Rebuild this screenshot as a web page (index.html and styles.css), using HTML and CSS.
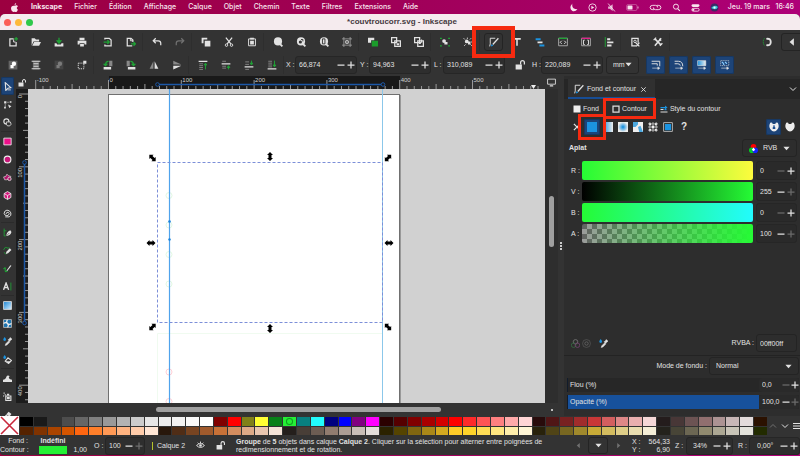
FILE: index.html
```html
<!DOCTYPE html>
<html lang="fr">
<head>
    <meta charset="UTF-8">
    <meta name="viewport" content="width=device-width, initial-scale=1.0">
    <title>*couvtroucorr.svg - Inkscape</title>
    <link rel="stylesheet" href="styles.css">
</head>
<body>
    <svg class="sprite" aria-hidden="true">
        <linearGradient id="blue-h"><stop offset="0" stop-color="#1b93e0"/><stop offset="1" stop-color="#eee"/></linearGradient>
        <linearGradient id="blue-d" x2="1" y2="1"><stop offset="0" stop-color="#1583d4"/><stop offset="1" stop-color="#d8f0ff"/></linearGradient>
        <radialGradient id="blue-r"><stop offset=".1" stop-color="#1b93e0"/><stop offset="1" stop-color="#eee"/></radialGradient>

        <!-- files and edit -->
        <symbol id="new" viewBox="0 0 16 16"><path d="M9 3H3v11h10V8" fill="none" stroke="currentColor" stroke-width="2"/><path d="M9 4v4h3" fill="none" stroke="currentColor" stroke-width="1.5"/><path d="M13 0v6M10 3h6" stroke="#1fa335" stroke-width="2"/></symbol>
        <symbol id="open" viewBox="0 0 16 16"><path d="M1 14V2h5l2 2h5v3H4z" fill="currentColor"/><path d="M5 8h11l-3 6H2z" fill="currentColor"/></symbol>
        <symbol id="save" viewBox="0 0 16 16"><path d="M1 10h3l1 2h6l1-2h3v5H1z" fill="currentColor"/><path d="M8 1v7M5 6l3 4 3-4z" fill="#1fa335" stroke="#1fa335" stroke-width="2"/></symbol>
        <symbol id="print" viewBox="0 0 16 16"><path d="M4 1h8v4H4zM1 6h14v6h-3v-2H4v2H1zM5 11h6v4H5z" fill="currentColor"/></symbol>
        <symbol id="import" viewBox="0 0 16 16"><path d="M3 4V2h7l3 3v9H3v-2" fill="none" stroke="currentColor" stroke-width="2"/><path d="M1 8h8M7 5l3 3-3 3" fill="none" stroke="#1fa335" stroke-width="2"/></symbol>
        <symbol id="export" viewBox="0 0 16 16"><path d="M10 14H2V2h6l3 3v3" fill="none" stroke="currentColor" stroke-width="2"/><path d="M7 2v4h4" fill="none" stroke="currentColor" stroke-width="1.5"/><path d="M8 11h6M12 8l3 3-3 3" fill="none" stroke="#1fa335" stroke-width="2"/></symbol>
        <symbol id="undo" viewBox="0 0 16 16"><path d="M3 6h7q4 0 4 4v3M6 2L2 6l4 4" fill="none" stroke="currentColor" stroke-width="2"/></symbol>
        <symbol id="redo" viewBox="0 0 16 16"><path d="M13 6H6q-4 0-4 4v3M10 2l4 4-4 4" fill="none" stroke="currentColor" stroke-width="2"/></symbol>
        <symbol id="copy" viewBox="0 0 16 16"><path d="M1 1h9v3H4v6H1z" fill="currentColor"/><path d="M6 6h9v9H6z" fill="currentColor"/></symbol>
        <symbol id="cut" viewBox="0 0 16 16"><path d="M3 1l8 10M13 1L5 11" stroke="currentColor" stroke-width="2"/><circle cx="4" cy="13" r="2" fill="none" stroke="currentColor" stroke-width="1.5"/><circle cx="12" cy="13" r="2" fill="none" stroke="currentColor" stroke-width="1.5"/></symbol>
        <symbol id="paste" viewBox="0 0 16 16"><path d="M2.500 3h11v11h-11z" fill="none" stroke="currentColor" stroke-width="1.500"/><path d="M5 1h6v3H5zM5 6h6v6H5z" fill="currentColor"/></symbol>
        <!-- zoom -->
        <symbol id="zoom-sel" viewBox="0 0 16 16"><circle cx="8" cy="7" r="6.500" fill="currentColor"/><path d="M11 11l4 4" stroke="currentColor" stroke-width="3"/></symbol>
        <symbol id="zoom-draw" viewBox="0 0 16 16"><circle cx="8" cy="7" r="6.500" fill="currentColor"/><circle cx="7" cy="8" r="2.500" fill="#333"/><path d="M8 4h3v3" stroke="#333" stroke-width="1.500" fill="none"/><path d="M11 11l4 4" stroke="currentColor" stroke-width="3"/></symbol>
        <symbol id="zoom-page" viewBox="0 0 16 16"><circle cx="8" cy="7" r="6.500" fill="currentColor"/><path d="M5.500 3h4v8h-4z" fill="none" stroke="#333" stroke-width="1.500"/><path d="M11 11l4 4" stroke="currentColor" stroke-width="3"/></symbol>
        <symbol id="frame" viewBox="0 0 16 16"><path d="M3 0v16M13 0v16M0 3h16M0 13h16" stroke="#aaa" stroke-width="1.200"/><path d="M6 6h4v4H6z" fill="none" stroke="currentColor" stroke-width="1.500"/></symbol>
        <symbol id="dup" viewBox="0 0 16 16"><path d="M0 1h10v4H5v4H0z" fill="currentColor"/><path d="M6 6h10v9H6z" fill="#1b9c2b"/></symbol>
        <symbol id="clone" viewBox="0 0 16 16"><path d="M1 1h8v8H1zM6 6h9v9H6z" fill="#333" stroke="currentColor" stroke-width="2"/><path d="M9 10h4v3H9z" fill="currentColor"/></symbol>
        <symbol id="unclone" viewBox="0 0 16 16"><path d="M1 1h8v8H1zM6 6h9v9H6z" fill="#333" stroke="currentColor" stroke-width="2"/><path d="M8 8h3v3H8zM11 4h2v5h-2z" fill="currentColor"/></symbol>
        <symbol id="group" viewBox="0 0 16 16"><circle cx="6.500" cy="6.500" r="3" fill="currentColor"/><path d="M7 8h5v4H7z" fill="currentColor"/><path d="M0 1h3v2H0zM13 1h3v2h-3zM0 13h3v2H0zM13 13h3v2h-3z" fill="#1fa335"/></symbol>
        <symbol id="ungroup" viewBox="0 0 16 16"><circle cx="6" cy="7" r="3" fill="currentColor"/><path d="M8 7h4v5H8z" fill="currentColor"/><path d="M1 2l2 2M13 2l-2 2M2 14l2-2M14 14l-2-2M7 1v2M15 8h-2" stroke="currentColor" stroke-width="1.500"/></symbol>
        <!-- dialogs -->
        <symbol id="fill" viewBox="0 0 16 16"><path d="M10 2H2v9l-1 4" fill="none" stroke="currentColor" stroke-width="1.500"/><path d="M15 2L6 12" stroke="currentColor" stroke-width="2"/><path d="M3 15l1-4 3 3z" fill="#1b93e0"/></symbol>
        <symbol id="text" viewBox="0 0 16 16"><path d="M2 3h12M8 3v11" stroke="currentColor" stroke-width="2.500"/></symbol>
        <symbol id="layers" viewBox="0 0 16 16"><path d="M1 2h8v3H1z" fill="#1b93e0"/><path d="M4 7h8v3H4z" fill="currentColor"/><path d="M7 12h8v3H7z" fill="#1b93e0"/></symbol>
        <symbol id="xml" viewBox="0 0 16 16"><path d="M1 2h14v12H1z" fill="none" stroke="#aaa" stroke-width="1.500"/><path d="M1 2h14" stroke="#1fa335" stroke-width="2"/><path d="M6 6L3.500 8.500 6 11M10 6l2.500 2.500L10 11" fill="none" stroke="currentColor" stroke-width="1.500"/></symbol>
        <symbol id="selectors" viewBox="0 0 16 16"><path d="M1 2h14v12H1z" fill="none" stroke="#aaa" stroke-width="1.500"/><path d="M1 2h14" stroke="#e0208a" stroke-width="2"/><path d="M6 5H4v7h2M10 5h2v7h-2" fill="none" stroke="currentColor" stroke-width="1.500"/></symbol>
        <symbol id="align" viewBox="0 0 16 16"><path d="M2 0v16" stroke="#1fa335" stroke-width="1.500"/><path d="M5 2h5v3H5zM5 7h10v3H5zM5 12h7v3H5z" fill="currentColor"/></symbol>
        <symbol id="docprops" viewBox="0 0 16 16"><path d="M10 14H3V2h10v7" fill="none" stroke="currentColor" stroke-width="2"/><circle cx="8" cy="7" r="2" fill="none" stroke="currentColor" stroke-width="1.500"/><path d="M9 9l6 6M15 9l-5 6" stroke="currentColor" stroke-width="2"/></symbol>
        <symbol id="prefs" viewBox="0 0 16 16"><path d="M3 3l10 10M13 2L3 14" stroke="currentColor" stroke-width="2.500"/><path d="M1 5l4-4M11 14l4-4M10 3l3 3" stroke="currentColor" stroke-width="2"/></symbol>
        <symbol id="snap" viewBox="0 0 16 16"><path d="M4 2q-4 5 0 12" fill="none" stroke="#1fa335" stroke-width="1.500" stroke-dasharray="2 1"/><path d="M7 3q7-1 7 5t-7 5" fill="none" stroke="currentColor" stroke-width="3"/></symbol>
        <symbol id="left" viewBox="0 0 16 16"><path d="M11 2v12L4 8z" fill="currentColor"/></symbol>
        <symbol id="right" viewBox="0 0 16 16"><path d="M5 2v12l7-6z" fill="currentColor"/></symbol>
        <symbol id="down" viewBox="0 0 16 16"><path d="M1 4h14l-7 8z" fill="currentColor"/></symbol>
        <!-- select tool options -->
        <symbol id="sel-all" viewBox="0 0 16 16"><path d="M1 1h14v14H1z" fill="#666"/><circle cx="9.500" cy="6" r="3.500" fill="#fff"/><path d="M4 8h5v5H4z" fill="#fff"/></symbol>
        <symbol id="sel-layers" viewBox="0 0 16 16"><path d="M3 1h10v14H3z" fill="#666"/><path d="M1 2h14M4 6h8M4 10h8M1 14h14" stroke="currentColor" stroke-width="1.500"/></symbol>
        <symbol id="sel-box" viewBox="0 0 16 16"><path d="M2 5h9v9H2z" fill="none" stroke="currentColor" stroke-width="1.500" stroke-dasharray="2 1.500"/><path d="M10 1h5v5h-5z" fill="currentColor"/></symbol>
        <symbol id="rot-l" viewBox="0 0 16 16"><path d="M10 1h5v9h-5z" fill="#888"/><path d="M1 11h12v4H1z" fill="currentColor"/><path d="M9 2Q4 2 4 8M1 6l3 3 3-3" fill="none" stroke="#1fa335" stroke-width="2"/></symbol>
        <symbol id="rot-r" viewBox="0 0 16 16"><path d="M1 1h5v9H1z" fill="#888"/><path d="M3 11h12v4H3z" fill="currentColor"/><path d="M7 2q5 0 5 6M9 6l3 3 3-3" fill="none" stroke="#1fa335" stroke-width="2"/></symbol>
        <symbol id="flip-h" viewBox="0 0 16 16"><path d="M7 2v12H1z" fill="#888"/><path d="M9 2v12h6z" fill="currentColor"/></symbol>
        <symbol id="flip-v" viewBox="0 0 16 16"><path d="M2 1l13 6H2z" fill="#888"/><path d="M2 15l13-6H2z" fill="currentColor"/></symbol>
        <symbol id="to-top" viewBox="0 0 16 16"><path d="M1 2h14" stroke="currentColor" stroke-width="2"/><path d="M2 6h6M2 9h6M2 12h6M2 15h6" stroke="#aaa"/><path d="M12 15V6M10 8l2-3 2 3z" fill="#1fa335" stroke="#1fa335" stroke-width="1.500"/></symbol>
        <symbol id="raise" viewBox="0 0 16 16"><path d="M1 6h14" stroke="currentColor" stroke-width="2"/><path d="M2 2h6M2 10h6M2 13h6" stroke="#aaa"/><path d="M12 15v-4M10 12l2-3 2 3z" fill="#1fa335" stroke="#1fa335" stroke-width="1.500"/></symbol>
        <symbol id="lower" viewBox="0 0 16 16"><path d="M1 11h14" stroke="currentColor" stroke-width="2"/><path d="M2 3h6M2 7h6M2 15h6" stroke="#aaa"/><path d="M12 1v4M10 5l2 3 2-3z" fill="#1fa335" stroke="#1fa335" stroke-width="1.500"/></symbol>
        <symbol id="to-bottom" viewBox="0 0 16 16"><path d="M1 14h14" stroke="currentColor" stroke-width="2"/><path d="M2 2h6M2 5h6M2 8h6M2 11h6" stroke="#aaa"/><path d="M12 1v9M10 8l2 3 2-3z" fill="#1fa335" stroke="#1fa335" stroke-width="1.500"/></symbol>
        <symbol id="unlock" viewBox="0 0 16 16"><path d="M1 7h10v8H1z" fill="currentColor"/><path d="M9 7V4q0-3 3-3t3 3v3" fill="none" stroke="currentColor" stroke-width="2"/></symbol>
        <symbol id="scale-a" viewBox="0 0 16 16"><path d="M1 2h13v8M1 6h9v3" fill="none" stroke="currentColor" stroke-width="1.500"/><path d="M2 13h10M11 11l3 2-3 2z" fill="currentColor" stroke="currentColor"/></symbol>
        <symbol id="scale-b" viewBox="0 0 16 16"><path d="M1 2h6q7 0 7 8M1 6h5q4 0 4 3" fill="none" stroke="currentColor" stroke-width="1.500"/><path d="M2 13h10M11 11l3 2-3 2z" fill="currentColor" stroke="currentColor"/></symbol>
        <symbol id="scale-c" viewBox="0 0 16 16"><path d="M1 1h13v8H1z" fill="url(#blue-h)" stroke="currentColor"/><path d="M2 13h10M11 11l3 2-3 2z" fill="currentColor" stroke="currentColor"/></symbol>
        <symbol id="scale-d" viewBox="0 0 16 16"><path d="M1 1h13v8H1z" fill="none" stroke="currentColor" stroke-dasharray="2 1"/><path d="M3 3l3 3M8 3l3 3M5 7h2" stroke="#8cf" stroke-width="2"/><path d="M2 13h10M11 11l3 2-3 2z" fill="currentColor" stroke="currentColor"/></symbol>
        <symbol id="minus" viewBox="0 0 16 16"><path d="M1 8h14" stroke="currentColor" stroke-width="2.500"/></symbol>
        <symbol id="plus" viewBox="0 0 16 16"><path d="M1 8h14M8 1v14" stroke="currentColor" stroke-width="2.500"/></symbol>
        <!-- toolbox -->
        <symbol id="t-select" viewBox="0 0 16 16"><path d="M4 1l10 9-5 1-4 4z" fill="none" stroke="currentColor" stroke-width="2"/><path d="M8 14h6" stroke="currentColor" stroke-width="1.500"/></symbol>
        <symbol id="t-node" viewBox="0 0 16 16"><path d="M2 2h4v4H2z" fill="currentColor"/><path d="M7 4h4M4 7v6" stroke="#999" stroke-width="1.500"/><path d="M9 8l6 3-4 3zM12 2h3v3h-3zM2 12h3v3H2z" fill="currentColor"/></symbol>
        <symbol id="t-shape" viewBox="0 0 16 16"><circle cx="6" cy="6" r="4.500" fill="none" stroke="currentColor" stroke-width="2"/><path d="M6 7h7l1.500 4-2.500 3H8l-2-3z" fill="#333" stroke="currentColor" stroke-width="1.500"/></symbol>
        <symbol id="t-rect" viewBox="0 0 16 16"><path d="M1.500 2h13v12h-13z" fill="#ee108a" stroke="#eee" stroke-width="1.500"/></symbol>
        <symbol id="t-circle" viewBox="0 0 16 16"><circle cx="8" cy="8" r="6" fill="#c8187a" stroke="#eee" stroke-width="2"/></symbol>
        <symbol id="t-star" viewBox="0 0 16 16"><path d="M1 7l4-1 2-4 3 3 4 1-3 4-4 2-4 0z" fill="#b0156b" stroke="#ddd" stroke-width="1.200"/><circle cx="11.500" cy="10.500" r="3" fill="#b0156b" stroke="#ddd" stroke-width="1.500"/></symbol>
        <symbol id="t-cube" viewBox="0 0 16 16"><path d="M8 1l6 3.500v7L8 15l-6-3.500v-7z" fill="#d4187c" stroke="#eee" stroke-width="1.500"/><path d="M2 4.500L8 8l6-3.500M8 8v7" fill="none" stroke="#eee" stroke-width="1.500"/></symbol>
        <symbol id="t-spiral" viewBox="0 0 16 16"><path d="M4 14h7q4-2 3-7-2-5-7-5-5 1-5 6 1 4 5 4 4-1 4-4-1-3-4-2-2 1-1 3" fill="none" stroke="currentColor" stroke-width="1.700"/></symbol>
        <symbol id="t-pen" viewBox="0 0 16 16"><path d="M2 1v13h3M2 5h4" fill="none" stroke="#1fa335" stroke-width="1.500"/><path d="M6 14q0-7 7-10l2 3q-1 6-9 7z" fill="currentColor"/><path d="M7 13l4-4" stroke="#333"/></symbol>
        <symbol id="t-pencil" viewBox="0 0 16 16"><path d="M1 7q3-7 6-4t4-1M2 11l3 4" fill="none" stroke="#1fa335" stroke-width="1.500"/><path d="M5 14l1-4 6-6 3 3-6 6z" fill="currentColor"/></symbol>
        <symbol id="t-calli" viewBox="0 0 16 16"><path d="M1 9q4-5 3 1t4 2" fill="none" stroke="#1fa335" stroke-width="2"/><path d="M6 12l7-10 2 1-7 9z" fill="currentColor"/></symbol>
        <symbol id="t-text" viewBox="0 0 16 16"><path d="M1 14L5.500 2 10 14M3 10h5" fill="none" stroke="currentColor" stroke-width="2.500"/><path d="M14 1v14" stroke="#1fa335" stroke-width="1.500"/></symbol>
        <symbol id="t-grad" viewBox="0 0 16 16"><path d="M1 1h14v14H1z" fill="url(#blue-d)" stroke="#ddd" stroke-width="1.500"/></symbol>
        <symbol id="t-mesh" viewBox="0 0 16 16"><path d="M1 1h14v14H1z" fill="#1b73ae" stroke="#bbb" stroke-width="1.500"/><path d="M8 1q-3 4 0 7t0 7M1 8q4-3 7 0t7 0" fill="none" stroke="#eee" stroke-width="2"/></symbol>
        <symbol id="t-drop" viewBox="0 0 16 16"><path d="M3 0q5 6 0 7-5-1 0-7z" fill="#1b93e0"/><path d="M4 15l1-3 5-5 2 2-5 5zM9 5l2-1 2-3 3 3-3 2-1 2z" fill="currentColor" stroke="currentColor"/></symbol>
        <symbol id="t-bucket" viewBox="0 0 16 16"><path d="M3 0q5 6 0 7-5-1 0-7z" fill="#1b93e0"/><path d="M9 5l6 5-5 5-6-4z" fill="none" stroke="currentColor" stroke-width="2"/><path d="M5 11h9l-4 4z" fill="currentColor"/></symbol>
        <symbol id="t-tweak" viewBox="0 0 16 16"><path d="M0 14V10q5 0 6-5 2-4 6-1-3 1-1 4 1 2 5 2v4z" fill="currentColor"/></symbol>
        <symbol id="t-spray" viewBox="0 0 16 16"><path d="M5 7h9v8H5z" fill="none" stroke="currentColor" stroke-width="2"/><path d="M7 9h5v4H7zM7 3h4v3H7zM1 1h2v2H1zM3 4h2v2H3zM0 6h2v2H0z" fill="currentColor"/></symbol>
        <symbol id="t-eraser" viewBox="0 0 16 16"><path d="M3 11l7-8 5 4-6 8H5z" fill="currentColor"/><path d="M6 8l5 4" stroke="#333"/></symbol>
        <!-- paint panel -->
        <symbol id="p-linear" viewBox="0 0 16 16"><path d="M0 0h16v16H0z" fill="url(#blue-h)"/></symbol>
        <symbol id="p-radial" viewBox="0 0 16 16"><path d="M0 0h16v16H0z" fill="url(#blue-r)"/></symbol>
        <symbol id="p-mesh" viewBox="0 0 16 16"><path d="M0 0h16v16H0z" fill="#eee"/><path d="M0 0h8v4L4 8H0zM8 8l4-2 4 10h-6z" fill="#4aa8e0"/></symbol>
        <symbol id="p-pattern" viewBox="0 0 16 16"><path d="M3 0v16M8 0v16M13 0v16M0 3h16M0 8h16M0 13h16" stroke="#eee" stroke-width="1"/><path d="M2 2h3v3H2zM6 6h4v4H6zM11 2h3v3h-3zM2 11h3v3H2zM11 11h3v3h-3z" fill="#eee"/></symbol>
        <symbol id="p-swatch" viewBox="0 0 16 16"><path d="M1 1h14v14H1z" fill="#222" stroke="#bbb" stroke-width="1.500"/><path d="M3 3h10v10H3z" fill="#1b93e0"/></symbol>
        <symbol id="square" viewBox="0 0 16 16"><path d="M1 1h14v14H1z" fill="#eee"/></symbol>
        <symbol id="outline" viewBox="0 0 16 16"><path d="M2 2h12v12H2z" fill="none" stroke="#ddd" stroke-width="2.500"/></symbol>
        <symbol id="stroke-style" viewBox="0 0 16 16"><path d="M1 14h14M1 9h6" stroke="#ddd" stroke-width="2"/><path d="M1 5h11M9 9h4" stroke="#1b93e0" stroke-width="2.500"/><path d="M10 1l5 4-5 4z" fill="#1b93e0"/></symbol>
        <symbol id="rule-even" viewBox="0 0 16 16"><path d="M2 1q3-1 4 2h4q1-3 4-2 3 6 0 10-3 4-6 4t-6-4Q-1 7 2 1z" fill="#eee"/><path d="M7 5h2v2q2 2 1 4H6q-1-2 1-4z" fill="#1d4f91"/></symbol>
        <symbol id="rule-zero" viewBox="0 0 16 16"><path d="M2 1q3-1 4 2h4q1-3 4-2 3 6 0 10-3 4-6 4t-6-4Q-1 7 2 1z" fill="#eee"/></symbol>
        <symbol id="rgb" viewBox="0 0 16 16"><circle cx="8" cy="5" r="5" fill="#f00"/><circle cx="5" cy="11" r="5" fill="#0c2"/><circle cx="11" cy="11" r="5" fill="#12f"/><path d="M8 6l3 4-3 3-3-3z" fill="#fff"/></symbol>
        <symbol id="managed" viewBox="0 0 16 16"><g fill="none" stroke-width="1.500"><circle cx="8" cy="5" r="4" stroke="#777"/><circle cx="4.500" cy="11" r="4" stroke="#386b42"/><circle cx="11.500" cy="11" r="4" stroke="#74456f"/></g></symbol>
        <symbol id="gamut" viewBox="0 0 16 16"><circle cx="8" cy="8" r="7" fill="none" stroke="#666"/><circle cx="8" cy="8" r="3" fill="none" stroke="#666" stroke-width="1.500"/></symbol>
        <symbol id="close" viewBox="0 0 16 16"><path d="M3 3l10 10M13 3L3 13" stroke="currentColor" stroke-width="2"/></symbol>
        <symbol id="chev-down" viewBox="0 0 16 16"><path d="M2 5l6 6 6-6" fill="none" stroke="currentColor" stroke-width="2"/></symbol>
        <symbol id="chev-up" viewBox="0 0 16 16"><path d="M2 11l6-6 6 6" fill="none" stroke="currentColor" stroke-width="2"/></symbol>
        <symbol id="burger" viewBox="0 0 16 16"><path d="M0 3h16M0 8h16M0 13h16" stroke="currentColor" stroke-width="2"/></symbol>
        <symbol id="screen" viewBox="0 0 16 16"><path d="M1 2h14v9H1z" fill="none" stroke="currentColor" stroke-width="1.500"/><path d="M5 14h6" stroke="currentColor" stroke-width="2"/></symbol>
        <symbol id="eye" viewBox="0 0 16 16"><path d="M1 8q7-7 14 0-7 7-14 0zM3 3l2 2M8 1v3M13 3l-2 2" fill="none" stroke="currentColor" stroke-width="1.700"/><circle cx="8" cy="8" r="2.300" fill="currentColor"/></symbol>
        <!-- system bar -->
        <symbol id="apple" viewBox="0 0 16 16"><path d="M11 0q0 3-3 4 0-3 3-4zM8 5q5-2 6 1-4 3 0 6-2 5-4 4-2-1-4 0Q3 16 2 11q-1-7 6-6z" fill="currentColor"/></symbol>
        <symbol id="moon" viewBox="0 0 16 16"><path d="M6 1Q4 11 15 11 11 16 6 14-1 9 6 1z" fill="currentColor"/></symbol>
        <symbol id="play" viewBox="0 0 16 16"><circle cx="8" cy="8" r="6.500" fill="none" stroke="currentColor" stroke-width="1.500"/><path d="M6 5v6l5-3z" fill="currentColor"/></symbol>
        <symbol id="mute" viewBox="0 0 16 16"><path d="M2 6h3l5-4v12l-5-4H2z" fill="currentColor" opacity=".8"/><path d="M2 1l12 14" stroke="currentColor" stroke-width="1.500"/></symbol>
        <symbol id="battery" viewBox="0 0 26 16"><rect x="1" y="2" width="21" height="12" rx="3" fill="none" stroke="currentColor" opacity=".6"/><rect x="3" y="4" width="10" height="8" rx="1" fill="currentColor"/><path d="M24 6v4" stroke="currentColor" stroke-width="1.500"/></symbol>
        <symbol id="link" viewBox="0 0 24 16"><path d="M9 12H7q-5 0-5-4t5-4h5q4 0 4 4M15 4h2q5 0 5 4t-5 4h-5q-4 0-4-4" fill="none" stroke="currentColor" stroke-width="1.700"/></symbol>
        <symbol id="search" viewBox="0 0 16 16"><circle cx="7" cy="6.500" r="4.500" fill="none" stroke="currentColor" stroke-width="1.700"/><path d="M10 10l4 4" stroke="currentColor" stroke-width="2"/></symbol>
        <symbol id="control" viewBox="0 0 16 16"><rect x="1" y="2" width="14" height="5" rx="2.500" fill="currentColor"/><rect x="1.500" y="9.500" width="13" height="5" rx="2.500" fill="none" stroke="currentColor" stroke-width="1.500"/><circle cx="4" cy="12" r="2" fill="currentColor"/></symbol>
        <symbol id="siri" viewBox="0 0 16 16"><circle cx="8" cy="8" r="7" fill="#3b2a66"/><path d="M2 9q6-7 12-2-2 7-12 2z" fill="#3fc8d8"/><circle cx="8" cy="8" r="2" fill="#eafcff"/></symbol>
        <symbol id="arrow" viewBox="-6 -6 12 12"><path d="M-4.500 0L-1.500-3V-1.500h3V-3l3 3-3 3V1.500h-3V3z" fill="#000"/></symbol>
    </svg>

    <nav class="menubar">
        <svg class="ic8 apple"><use href="#apple"/></svg>
        <a href="#" class="app-name">Inkscape</a>
        <a href="#">Fichier</a>
        <a href="#">Édition</a>
        <a href="#">Affichage</a>
        <a href="#">Calque</a>
        <a href="#">Objet</a>
        <a href="#">Chemin</a>
        <a href="#">Texte</a>
        <a href="#">Filtres</a>
        <a href="#">Extensions</a>
        <a href="#">Aide</a>
        <div class="tray">
            <svg class="ic8"><use href="#moon"/></svg>
            <svg class="ic8"><use href="#play"/></svg>
            <svg class="ic8"><use href="#mute"/></svg>
            <svg class="ic-wide"><use href="#battery"/></svg>
            <svg class="ic-wide"><use href="#link"/></svg>
            <svg class="ic8"><use href="#search"/></svg>
            <svg class="ic8"><use href="#control"/></svg>
            <svg class="ic8"><use href="#siri"/></svg>
        </div>
        <span class="clock">Jeu. 19 mars&nbsp;&nbsp; 16:46</span>
    </nav>

    <div class="window">
        <header class="titlebar">
            <div class="lights"><i class="red"></i><i class="yellow"></i><i class="green"></i></div>
            <h1>*couvtroucorr.svg - Inkscape</h1>
        </header>

        <div class="toolbar commands">
            <div class="group">
                <button aria-label="Nouveau"><svg><use href="#new"/></svg></button>
                <button aria-label="Ouvrir"><svg><use href="#open"/></svg></button>
                <button aria-label="Enregistrer"><svg><use href="#save"/></svg></button>
                <button aria-label="Imprimer"><svg><use href="#print"/></svg></button>
            </div>
            <div class="group">
                <button aria-label="Importer"><svg><use href="#import"/></svg></button>
                <button aria-label="Exporter"><svg><use href="#export"/></svg></button>
            </div>
            <div class="group">
                <button aria-label="Annuler"><svg><use href="#undo"/></svg></button>
                <button aria-label="Rétablir" class="dim"><svg><use href="#redo"/></svg></button>
            </div>
            <div class="group">
                <button aria-label="Copier"><svg><use href="#copy"/></svg></button>
                <button aria-label="Couper"><svg><use href="#cut"/></svg></button>
                <button aria-label="Coller"><svg><use href="#paste"/></svg></button>
            </div>
            <div class="group">
                <button aria-label="Zoom sélection"><svg><use href="#zoom-sel"/></svg></button>
                <button aria-label="Zoom dessin"><svg><use href="#zoom-draw"/></svg></button>
                <button aria-label="Zoom page"><svg><use href="#zoom-page"/></svg></button>
                <button aria-label="Centrer la page"><svg><use href="#frame"/></svg></button>
            </div>
            <div class="group">
                <button aria-label="Dupliquer"><svg><use href="#dup"/></svg></button>
                <button aria-label="Cloner"><svg><use href="#clone"/></svg></button>
                <button aria-label="Délier le clone"><svg><use href="#unclone"/></svg></button>
            </div>
            <div class="group">
                <button aria-label="Grouper"><svg><use href="#group"/></svg></button>
                <button aria-label="Dégrouper"><svg><use href="#ungroup"/></svg></button>
            </div>
            <div class="group">
                <button aria-label="Fond et contour" class="raised marked"><svg><use href="#fill"/></svg><span class="mark mark-tool"></span></button>
                <button aria-label="Texte et police"><svg><use href="#text"/></svg></button>
                <button aria-label="Calques et objets"><svg><use href="#layers"/></svg></button>
                <button aria-label="Éditeur XML"><svg><use href="#xml"/></svg></button>
                <button aria-label="Sélecteurs et CSS"><svg><use href="#selectors"/></svg></button>
                <button aria-label="Aligner et distribuer"><svg><use href="#align"/></svg></button>
            </div>
            <div class="group">
                <button aria-label="Propriétés du document"><svg><use href="#docprops"/></svg></button>
                <button aria-label="Préférences"><svg><use href="#prefs"/></svg></button>
            </div>
            <div class="snapping">
                <button aria-label="Magnétisme"><svg><use href="#snap"/></svg></button>
                <button aria-label="Options de magnétisme" class="raised more"><svg><use href="#left"/></svg></button>
            </div>
        </div>

        <div class="toolbar options">
            <div class="group">
                <button aria-label="Tout sélectionner"><svg><use href="#sel-all"/></svg></button>
                <button aria-label="Tous les calques"><svg><use href="#sel-layers"/></svg></button>
                <button aria-label="Désélectionner" class="dim"><svg><use href="#sel-all"/></svg></button>
                <button aria-label="Sélection au toucher"><svg><use href="#sel-box"/></svg></button>
            </div>
            <div class="group">
                <button aria-label="Rotation anti-horaire"><svg><use href="#rot-l"/></svg></button>
                <button aria-label="Rotation horaire"><svg><use href="#rot-r"/></svg></button>
                <button aria-label="Miroir horizontal"><svg><use href="#flip-h"/></svg></button>
                <button aria-label="Miroir vertical"><svg><use href="#flip-v"/></svg></button>
            </div>
            <div class="group">
                <button aria-label="Premier plan"><svg><use href="#to-top"/></svg></button>
                <button aria-label="Monter"><svg><use href="#raise"/></svg></button>
                <button aria-label="Descendre"><svg><use href="#lower"/></svg></button>
                <button aria-label="Arrière-plan"><svg><use href="#to-bottom"/></svg></button>
            </div>
            <label for="pos-x">X :</label>
            <div class="spin"><input id="pos-x" value="66,874"><button aria-label="moins"><svg><use href="#minus"/></svg></button><button aria-label="plus"><svg><use href="#plus"/></svg></button></div>
            <label for="pos-y">Y :</label>
            <div class="spin"><input id="pos-y" value="94,963"><button aria-label="moins"><svg><use href="#minus"/></svg></button><button aria-label="plus"><svg><use href="#plus"/></svg></button></div>
            <label for="size-l">L :</label>
            <div class="spin"><input id="size-l" value="310,089"><button aria-label="moins"><svg><use href="#minus"/></svg></button><button aria-label="plus"><svg><use href="#plus"/></svg></button></div>
            <button class="ratio" aria-label="Verrouiller les proportions"><svg><use href="#unlock"/></svg></button>
            <label for="size-h">H :</label>
            <div class="spin"><input id="size-h" value="220,089"><button aria-label="moins"><svg><use href="#minus"/></svg></button><button aria-label="plus"><svg><use href="#plus"/></svg></button></div>
            <div class="drop unit"><select aria-label="Unité"><option>mm</option></select><svg><use href="#down"/></svg></div>
            <div class="toggles">
                <button class="on" aria-label="Épaisseur du contour"><svg><use href="#scale-a"/></svg></button>
                <button class="on" aria-label="Rayon des coins"><svg><use href="#scale-b"/></svg></button>
                <button class="on" aria-label="Dégradés"><svg><use href="#scale-c"/></svg></button>
                <button class="on" aria-label="Motifs"><svg><use href="#scale-d"/></svg></button>
            </div>
        </div>

        <main class="workspace">
            <aside class="toolbox">
                <div class="group">
                    <button class="on" aria-label="Sélecteur"><svg><use href="#t-select"/></svg></button>
                    <button aria-label="Nœuds"><svg><use href="#t-node"/></svg></button>
                    <button aria-label="Constructeur de formes"><svg><use href="#t-shape"/></svg></button>
                </div>
                <div class="group">
                    <button aria-label="Rectangle"><svg><use href="#t-rect"/></svg></button>
                    <button aria-label="Ellipse"><svg><use href="#t-circle"/></svg></button>
                    <button aria-label="Étoile"><svg><use href="#t-star"/></svg></button>
                    <button aria-label="Boîte 3D"><svg><use href="#t-cube"/></svg></button>
                    <button aria-label="Spirale"><svg><use href="#t-spiral"/></svg></button>
                </div>
                <div class="group">
                    <button aria-label="Stylo"><svg><use href="#t-pen"/></svg></button>
                    <button aria-label="Crayon"><svg><use href="#t-pencil"/></svg></button>
                    <button aria-label="Calligraphie"><svg><use href="#t-calli"/></svg></button>
                    <button aria-label="Texte"><svg><use href="#t-text"/></svg></button>
                </div>
                <div class="group">
                    <button aria-label="Dégradé"><svg><use href="#t-grad"/></svg></button>
                    <button aria-label="Filet"><svg><use href="#t-mesh"/></svg></button>
                    <button aria-label="Pipette"><svg><use href="#t-drop"/></svg></button>
                    <button aria-label="Remplissage"><svg><use href="#t-bucket"/></svg></button>
                </div>
                <div class="group">
                    <button aria-label="Ajuster"><svg><use href="#t-tweak"/></svg></button>
                    <button aria-label="Pulvériser"><svg><use href="#t-spray"/></svg></button>
                    <button aria-label="Gomme"><svg><use href="#t-eraser"/></svg></button>
                </div>
            </aside>

            <section class="document">
                <button class="corner" aria-label="Verrouiller les guides"><svg><use href="#unlock"/></svg></button>
                <svg class="ruler ruler-h" id="ruler-h">
                    <rect x="81" width="291" height="13" fill="#191919"/>
                </svg>
                <div class="strip-top"><svg><use href="#screen"/></svg></div>
                <svg class="ruler ruler-v" id="ruler-v"></svg>
                <svg class="canvas">
                    <rect x="82" y="6" width="291" height="400" fill="#999"/>
                    <rect x="80.500" y="5.500" width="291" height="400" fill="#fff" stroke="#707070"/>
                    <g fill="none" stroke="#e2f8e4">
                        <path d="M129.500 320V244.500h225" stroke="#f0fbf0"/>
                        <circle cx="141" cy="106.500" r="3"/><circle cx="141" cy="136" r="3"/>
                        <circle cx="141" cy="165.500" r="3"/><circle cx="141" cy="195" r="3"/>
                    </g>
                    <g fill="none" stroke="#ffd0d6"><circle cx="141" cy="283" r="3"/><circle cx="141" cy="312.500" r="3"/></g>
                    <path d="M141.500 0v320" stroke="#4fa3ec" stroke-width="1.200"/>
                    <path d="M354.500 0v320" stroke="#8bc7ea"/>
                    <rect x="129.500" y="73.500" width="225" height="160" fill="none" stroke="#7c8fd8" stroke-dasharray="3 2"/>
                    <circle cx="141.500" cy="132.500" r="1.300" fill="#1b83dc"/><circle cx="141.500" cy="150.500" r="1.200" fill="#1b83dc"/>
                    <g id="handles">
                        <use href="#arrow" width="12" height="12" transform="translate(124.500 69) rotate(45) translate(-6 -6)"/>
                        <use href="#arrow" width="12" height="12" transform="translate(242 67.500) rotate(90) translate(-6 -6)"/>
                        <use href="#arrow" width="12" height="12" transform="translate(360 69) rotate(-45) translate(-6 -6)"/>
                        <use href="#arrow" width="12" height="12" transform="translate(123 154) translate(-6 -6)"/>
                        <use href="#arrow" width="12" height="12" transform="translate(361 154) translate(-6 -6)"/>
                        <use href="#arrow" width="12" height="12" transform="translate(124.500 238) rotate(-45) translate(-6 -6)"/>
                        <use href="#arrow" width="12" height="12" transform="translate(242 239.500) rotate(90) translate(-6 -6)"/>
                        <use href="#arrow" width="12" height="12" transform="translate(360 238) rotate(45) translate(-6 -6)"/>
                    </g>
                </svg>
                <div class="scroll-v"><i></i></div>
                <div class="scroll-h"><i></i></div>
                <div class="scroll-dot"></div>
            </section>

            <div class="splitter"><i></i><i></i><i></i></div>

            <aside class="panel">
                <div class="tabs">
                    <div class="tab"><svg><use href="#fill"/></svg><span>Fond et contour</span><button aria-label="Fermer"><svg><use href="#close"/></svg></button></div>
                    <button class="tab-menu" aria-label="Menu"><svg><use href="#chev-down"/></svg></button>
                </div>
                <div class="panel-body">
                    <div class="subtabs">
                        <button><svg><use href="#square"/></svg>Fond</button>
                        <button class="marked"><svg><use href="#outline"/></svg>Contour<span class="mark mark-tab"></span></button>
                        <button><svg><use href="#stroke-style"/></svg>Style du contour</button>
                    </div>
                    <div class="paints">
                        <button aria-label="Aucun"><svg><use href="#close"/></svg></button>
                        <button class="on marked" aria-label="Aplat"><i class="flat"></i><span class="mark mark-flat"></span></button>
                        <button aria-label="Dégradé linéaire"><svg><use href="#p-linear"/></svg></button>
                        <button aria-label="Dégradé radial"><svg><use href="#p-radial"/></svg></button>
                        <button aria-label="Filet"><svg><use href="#p-mesh"/></svg></button>
                        <button aria-label="Motif"><svg><use href="#p-pattern"/></svg></button>
                        <button aria-label="Échantillon"><svg><use href="#p-swatch"/></svg></button>
                        <button class="unknown">?</button>
                        <div class="rules">
                            <button class="on" aria-label="Pair-impair"><svg><use href="#rule-even"/></svg></button>
                            <button aria-label="Non nul"><svg><use href="#rule-zero"/></svg></button>
                        </div>
                    </div>
                    <div class="mode">
                        <strong>Aplat</strong>
                        <div class="drop model"><svg class="lead"><use href="#rgb"/></svg><select aria-label="Modèle de couleur"><option>RVB</option></select><svg><use href="#down"/></svg></div>
                    </div>
                    <div class="channel">
                        <label for="ch-r">R :</label><input class="range red" id="ch-r" type="range" min="0" max="255" value="0">
                        <div class="spin"><input aria-label="Rouge" value="0"><button class="dim" aria-label="moins"><svg><use href="#minus"/></svg></button><button aria-label="plus"><svg><use href="#plus"/></svg></button></div>
                    </div>
                    <div class="channel">
                        <label for="ch-v">V :</label><input class="range green" id="ch-v" type="range" min="0" max="255" value="255">
                        <div class="spin"><input aria-label="Vert" value="255"><button aria-label="moins"><svg><use href="#minus"/></svg></button><button class="dim" aria-label="plus"><svg><use href="#plus"/></svg></button></div>
                    </div>
                    <div class="channel">
                        <label for="ch-b">B :</label><input class="range blue" id="ch-b" type="range" min="0" max="255" value="0">
                        <div class="spin"><input aria-label="Bleu" value="0"><button class="dim" aria-label="moins"><svg><use href="#minus"/></svg></button><button aria-label="plus"><svg><use href="#plus"/></svg></button></div>
                    </div>
                    <div class="channel">
                        <label for="ch-a">A :</label><input class="range alpha" id="ch-a" type="range" min="0" max="100" value="100">
                        <div class="spin"><input aria-label="Alpha" value="100"><button aria-label="moins"><svg><use href="#minus"/></svg></button><button class="dim" aria-label="plus"><svg><use href="#plus"/></svg></button></div>
                    </div>
                    <div class="hex">
                        <svg><use href="#managed"/></svg>
                        <svg><use href="#gamut"/></svg>
                        <svg class="picker"><use href="#t-drop"/></svg>
                        <label for="rgba">RVBA :</label>
                        <input id="rgba" class="field" value="00ff00ff">
                    </div>
                </div>
                <div class="blend">
                    <label for="blend">Mode de fondu :</label>
                    <div class="drop"><select id="blend"><option>Normal</option></select><svg><use href="#down"/></svg></div>
                </div>
                <div class="bar">
                    <label for="blur">Flou (%)</label><input id="blur" type="range" value="0">
                    <div class="spin"><input aria-label="Flou" value="0,0"><button class="dim" aria-label="moins"><svg><use href="#minus"/></svg></button><button aria-label="plus"><svg><use href="#plus"/></svg></button></div>
                </div>
                <div class="bar full">
                    <label for="opacity">Opacité (%)</label><input id="opacity" type="range" value="100">
                    <div class="spin"><input aria-label="Opacité" value="100,0"><button aria-label="moins"><svg><use href="#minus"/></svg></button><button class="dim" aria-label="plus"><svg><use href="#plus"/></svg></button></div>
                </div>
            </aside>
        </main>

        <div class="palette">
            <svg class="none" viewBox="0 0 18 18"><path d="M1 1l16 16M17 1L1 17" stroke="#c8283c" stroke-width="1.500"/></svg>
            <div class="swatches" id="swatches"></div>
            <div class="palette-nav">
                <svg class="dim"><use href="#chev-up"/></svg>
                <svg><use href="#chev-down"/></svg>
                <svg><use href="#burger"/></svg>
            </div>
        </div>

        <footer class="status">
            <div class="style">
                <span>Fond :</span><b>Indéfini</b><span></span>
                <span>Contour :</span><i></i><span>1,00</span>
            </div>
            <label for="op">O :</label>
            <div class="spin op"><input id="op" value="100"><button aria-label="moins"><svg><use href="#minus"/></svg></button><button class="dim" aria-label="plus"><svg><use href="#plus"/></svg></button></div>
            <div class="layer">Calque 2</div>
            <svg><use href="#eye"/></svg>
            <svg><use href="#unlock"/></svg>
            <p><b>Groupe</b> de <b>5</b> objets dans calque <b>Calque 2</b>. Cliquer sur la sélection pour alterner entre poignées de redimensionnement et de rotation.</p>
            <div class="pages">
                <button class="dim" aria-label="Page précédente"><svg><use href="#left"/></svg></button>
                <button class="raised" aria-label="Pages"><svg><use href="#down"/></svg></button>
                <button class="dim" aria-label="Page suivante"><svg><use href="#right"/></svg></button>
            </div>
            <dl><dt>X :</dt><dd>564,33</dd><dt>Y :</dt><dd>6,90</dd></dl>
            <label for="zoom">Z :</label>
            <div class="spin zoom"><input id="zoom" value="34%"><button aria-label="moins"><svg><use href="#minus"/></svg></button><button aria-label="plus"><svg><use href="#plus"/></svg></button></div>
            <label for="rot">R :</label>
            <div class="spin rot"><input id="rot" value="0,00°"><button aria-label="moins"><svg><use href="#minus"/></svg></button><button aria-label="plus"><svg><use href="#plus"/></svg></button></div>
        </footer>
    </div>

    <script src="script.js"></script>
</body>
</html>
```

FILE: styles.css
```css
* {
    box-sizing: border-box;
}
body {
    margin: 0;
    height: 100vh;
    display: flex;
    flex-direction: column;
    overflow: hidden;
    font-family: "Liberation Sans", Arial, sans-serif;
    font-size: 7px;
    line-height: 8px;
    color: #e2e2e2;
    background: linear-gradient(90deg, #9c0040, #a00058 50%, #ae0078);
}
button, input, select {
    font: inherit;
    color: inherit;
    background: none;
    border: 0;
    padding: 0;
    margin: 0;
    min-width: 0;
    appearance: none;
}
button {
    display: flex;
    align-items: center;
    justify-content: center;
}
svg {
    display: block;
    flex: none;
    width: 10px;
    height: 10px;
}
.sprite {
    position: absolute;
    width: 0;
    height: 0;
}
.dim {
    opacity: 0.35;
}
.on {
    background: #1d4478;
    border-radius: 2px;
    box-shadow: inset 0 0 0 1px #173761;
}
.raised {
    border: 1px solid #242424;
    border-radius: 3px;
}

/* Red rectangles drawn around the controls to click */
.marked {
    position: relative;
}
.mark {
    position: absolute;
    border: 3px solid #f62a10;
    z-index: 5;
    pointer-events: none;
}
.mark-tool {
    inset: -8px -13px;
    border-width: 4px;
}
.mark-tab {
    inset: -1px -9px;
}
.mark-flat {
    inset: -5px -6px;
}

/* System bar */
.menubar {
    display: flex;
    align-items: center;
    height: 14px;
    flex: none;
    gap: 12px;
    padding: 0 6px 0 10px;
    font-family: Inter, "Liberation Sans", sans-serif;
    font-weight: 500;
    color: #f8e4ee;
}
.menubar a {
    color: inherit;
    text-decoration: none;
}
.menubar .app-name {
    font-weight: 700;
}
.ic8 {
    width: 9px;
    height: 9px;
}
.ic-wide {
    width: 13px;
    height: 9px;
}
.tray {
    display: flex;
    gap: 10px;
    margin-left: auto;
}
.clock {
    white-space: nowrap;
    margin-left: -3px;
}

/* Window */
.window {
    flex: 1;
    min-height: 0;
    display: flex;
    flex-direction: column;
    background: #333;
    border-radius: 5px 5px 3px 3px;
    overflow: hidden;
    margin-bottom: 1px;
}
.titlebar {
    display: grid;
    grid-template-columns: 1fr auto 1fr;
    align-items: center;
    height: 16px;
    flex: none;
    padding-left: 4px;
    background: #f5ebee;
    color: #453a3e;
}
.titlebar h1 {
    margin: 0;
    font-size: 8px;
    font-weight: 700;
}
.lights {
    display: flex;
    gap: 4px;
}
.lights i {
    width: 7px;
    height: 7px;
    border-radius: 50%;
}
.lights .red {
    background: #fb5f57;
}
.lights .yellow {
    background: #fdb93a;
}
.lights .green {
    background: #2fc84a;
}

.toolbar {
    display: flex;
    align-items: center;
    height: 23px;
    flex: none;
    padding-left: 1px;
}
.toolbar .group {
    display: flex;
    border-right: 1px solid #2e2e2e;
    margin-right: 2px;
}
.toolbar .group button {
    width: 23px;
    height: 18px;
}
.toolbar .group .raised {
    width: 19px;
    margin: 0 2px;
}
.snapping {
    display: flex;
    margin-left: auto;
    gap: 9px;
}
.snapping .more {
    width: 22px;
    height: 18px;
    margin-right: -3px;
}
.options label {
    width: 9px;
    white-space: nowrap;
}
.spin {
    display: flex;
    align-items: center;
    height: 18px;
    border: 1px solid #262626;
    border-radius: 3px;
    background: #2e2e2e;
    padding-left: 3px;
}
.spin input {
    flex: 1;
    width: 10px;
}
.spin button {
    width: 10px;
    height: 16px;
}
.spin svg {
    width: 8px;
    height: 8px;
}
.options .spin {
    width: 62px;
    margin-right: 3px;
}
.options .ratio {
    width: 24px;
}
.drop {
    display: flex;
    align-items: center;
    height: 18px;
    border: 1px solid #242424;
    border-radius: 3px;
    padding: 0 6px;
}
.drop select {
    flex: 1;
}
.drop svg {
    width: 7px;
    height: 7px;
}
.unit {
    width: 33px;
}
.toggles {
    display: flex;
    gap: 4px;
    margin-left: 7px;
}
.toggles button {
    width: 19px;
    height: 18px;
}

/* Workspace */
.workspace {
    flex: 1;
    min-height: 0;
    display: flex;
}
.toolbox {
    width: 16px;
    flex: none;
    overflow: hidden;
    padding: 1px 2px 0 1px;
}
.toolbox .group {
    border-bottom: 1px solid #2b2b2b;
}
.toolbox button {
    width: 13px;
    height: 18px;
}
.toolbox svg {
    width: 9px;
    height: 9px;
}
.document {
    flex: 1;
    min-width: 0;
    display: grid;
    grid-template-columns: 12px 1fr 13px;
    grid-template-rows: 13px 1fr 13px;
}
.document .corner svg {
    width: 8px;
    height: 8px;
}
.ruler {
    width: 100%;
    height: 100%;
    overflow: hidden;
    background: #333;
}
.ruler text {
    font-size: 6px;
    fill: #d0d0d0;
}
.ruler-v {
    background: #1c1c1c;
}
.canvas {
    width: 100%;
    height: 100%;
    overflow: hidden;
    background: #d1d1d1;
}
.strip-top {
    display: flex;
    align-items: center;
    justify-content: center;
}
.strip-top svg {
    width: 9px;
    height: 9px;
}
.scroll-v {
    padding: 107px 4px 0;
    background: #2e2e2e;
}
.scroll-v i {
    display: block;
    height: 51px;
    border-radius: 3px;
    background: #a0a0a0;
}
.scroll-h {
    grid-column: 1 / 3;
    padding: 4px 104px 0 140px;
}
.scroll-h i {
    display: block;
    height: 5px;
    border-radius: 3px;
    background: #a0a0a0;
}
.scroll-dot {
    width: 2px;
    height: 2px;
    border-radius: 50%;
    background: #eee;
    margin: 6px auto;
}
.splitter {
    width: 6px;
    flex: none;
    display: flex;
    flex-direction: column;
    align-items: center;
    justify-content: center;
    gap: 1px;
}
.splitter i {
    width: 2px;
    height: 2px;
    background: #ccc;
}

/* Fill and stroke panel */
.panel {
    width: 236px;
    flex: none;
    display: flex;
    flex-direction: column;
    padding: 3px 0 7px;
    background: #2d2d2d;
}
.tabs {
    display: flex;
    height: 20px;
    background: #262626;
    flex: none;
}
.tab {
    display: flex;
    align-items: center;
    gap: 3px;
    margin-left: 4px;
    padding: 0 8px 0 6px;
    background: #303030;
    box-shadow: inset 0 -2px #174d95;
}
.tab button {
    margin-left: 1px;
}
.tab button svg {
    width: 7px;
    height: 7px;
}
.tab-menu {
    margin-left: auto;
    width: 15px;
}
.tab-menu svg {
    width: 8px;
    height: 8px;
}
.panel-body {
    flex: 1;
    display: flex;
    flex-direction: column;
    padding: 0 3px 3px 7px;
    border-bottom: 1px solid #232323;
}
.subtabs {
    display: flex;
    align-items: center;
    height: 19px;
    gap: 13px;
    padding-left: 2px;
}
.subtabs button {
    gap: 2px;
    height: 19px;
    white-space: nowrap;
}
.subtabs svg {
    width: 8px;
    height: 8px;
}
.paints {
    display: flex;
    align-items: center;
    height: 18px;
}
.paints button {
    width: 15px;
    height: 16px;
}
.paints button:first-child {
    width: 12px;
    margin-right: 1px;
}
.paints .on {
    width: 16px;
}
.paints .flat {
    width: 10px;
    height: 10px;
    background: #1b93e0;
}
.paints .unknown {
    font-size: 10px;
    font-weight: 700;
    width: 18px;
}
.rules {
    display: flex;
    gap: 1px;
    margin-left: auto;
}
.rules button:first-child {
    width: 15px;
    margin-right: 0;
}
.mode {
    display: flex;
    align-items: center;
    justify-content: space-between;
    height: 24px;
    margin-bottom: 1px;
}
.mode strong {
    margin-left: -2px;
}
.model {
    width: 55px;
    gap: 5px;
}
.model .lead {
    width: 9px;
    height: 9px;
}
.channel {
    display: flex;
    align-items: center;
    height: 19px;
    margin-bottom: 2px;
}
.channel label {
    width: 11px;
    white-space: nowrap;
}
.range {
    flex: 1;
    height: 19px;
    border-radius: 2px;
}
.range::-webkit-slider-thumb {
    appearance: none;
    width: 6px;
    height: 19px;
    background: none;
}
.range.red {
    background: linear-gradient(90deg, #25fb35, #fdfb3d);
}
.range.green {
    background: linear-gradient(90deg, #000, #25fb35);
}
.range.blue {
    background: linear-gradient(90deg, #25fb35, #22fbfd);
}
.range.alpha {
    background: linear-gradient(90deg, rgba(37, 251, 53, 0), #25fb35), repeating-conic-gradient(#9b9b9b 0 25%, #636363 0 50%) 0 0 / 10px 10px;
}
.channel .spin {
    width: 41px;
    margin-left: 3px;
    height: 19px;
    background: #2a2a2a;
}
.hex {
    display: flex;
    align-items: center;
    gap: 2px;
    margin-top: auto;
}
.hex svg {
    width: 9px;
    height: 9px;
}
.hex .picker {
    margin-left: 6px;
}
.hex label {
    margin-left: auto;
}
.field {
    width: 41px;
    height: 18px;
    border: 1px solid #242424;
    border-radius: 3px;
    padding-left: 3px;
}
.blend {
    display: flex;
    align-items: center;
    justify-content: flex-end;
    gap: 2px;
    height: 20px;
    padding-right: 1px;
    margin-bottom: 2px;
}
.blend .drop {
    width: 90px;
}
.bar {
    display: grid;
    grid-template-columns: 1fr 40px;
    align-items: center;
    height: 14px;
    margin: 0 1px 0 3px;
    background: #272727;
    border-left: 1px solid #121c2b;
}
.bar + .bar {
    margin-top: 3px;
}
.bar label {
    grid-area: 1 / 1;
    padding-left: 2px;
    z-index: 1;
}
.bar > input {
    grid-area: 1 / 1;
    height: 14px;
}
.bar > input::-webkit-slider-thumb {
    appearance: none;
    width: 1px;
    height: 14px;
}
.bar.full > input {
    background: #17519c;
}
.bar .spin {
    height: 14px;
    border: 0;
    background: #2a2a2a;
}
.bar .spin button {
    width: 9px;
}

/* Palette */
.palette {
    display: flex;
    height: 20px;
    flex: none;
    padding-bottom: 1px;
}
.none {
    width: 19px;
    height: 19px;
    background: #fff;
}
.swatches {
    flex: 1;
    display: grid;
    grid-template-columns: repeat(54, 1fr);
    gap: 1px;
    padding: 1px 0 0 1px;
}
.swatches i {
    position: relative;
}
.swatches .current::after {
    content: "";
    position: absolute;
    inset: 1px 3px;
    border: 1px solid #119c22;
    border-radius: 50%;
}
.palette-nav {
    width: 33px;
    display: flex;
    align-items: center;
    gap: 4px;
    padding-left: 2px;
}
.palette-nav svg {
    width: 8px;
    height: 8px;
}

/* Status bar */
.status {
    display: flex;
    align-items: center;
    height: 19px;
    flex: none;
}
.status > svg {
    width: 9px;
    height: 9px;
    margin-right: 11px;
}
.status label {
    width: 11px;
    white-space: nowrap;
}
.style {
    display: grid;
    grid-template-columns: 28px 39px 20px;
    row-gap: 1px;
    width: 94px;
    text-align: right;
    white-space: nowrap;
}
.style b {
    margin-left: 11px;
    text-align: center;
}
.style i {
    margin-left: 11px;
    background: #25f035;
}
.layer {
    border-left: 1px solid #b4c42c;
    padding-left: 4px;
    width: 44px;
    margin-left: 7px;
}
.status p {
    flex: 1;
    margin: 0;
}
.op {
    width: 40px;
}
.pages {
    display: flex;
    align-items: center;
    margin-right: 4px;
}
.pages button {
    width: 20px;
    height: 17px;
}
.pages svg {
    width: 7px;
    height: 7px;
}
.status dl {
    display: grid;
    grid-template-columns: 10px 28px;
    margin: 0 5px 0 0;
    white-space: nowrap;
}
.status dd {
    margin: 0;
    text-align: right;
}
.zoom {
    width: 47px;
    margin-right: 5px;
    padding-left: 6px;
}
.rot {
    width: 51px;
    padding-left: 7px;
}
```

FILE: script.js
```js
const NS = 'http://www.w3.org/2000/svg';

function add(parent, tag, attrs, text) {
    const el = document.createElementNS(NS, tag);
    for (const key in attrs) el.setAttribute(key, attrs[key]);
    if (text !== undefined) el.textContent = text;
    parent.appendChild(el);
}

// Rulers: 100 mm is 72.8 px at 34 %
const STEP = 7.28;

function tickLength(i) {
    if (i % 10 === 0) return 9;
    return i % 5 === 0 ? 5 : 3;
}

const rulerH = document.getElementById('ruler-h');
for (let i = -10; i < 60; i++) {
    const x = 80.5 + i * STEP;
    add(rulerH, 'path', { d: `M${x} 13V${13 - tickLength(i)}`, stroke: '#999' });
    if (i % 10 === 0) add(rulerH, 'text', { x: x + 1, y: 6 }, i * 10);
}
add(rulerH, 'path', { d: 'M131 8.5H353', stroke: '#1c58a8', 'stroke-width': 1.5 });
add(rulerH, 'circle', { cx: 129.5, cy: 8.5, r: 1.8, fill: 'none', stroke: '#1c58a8' });
add(rulerH, 'circle', { cx: 355, cy: 8.5, r: 1.8, fill: 'none', stroke: '#1c58a8' });
add(rulerH, 'path', { d: 'M503 9h5l-2.5 4z', fill: '#eee' });

const rulerV = document.getElementById('ruler-v');
for (let i = 0; i < 50; i++) {
    const y = 5 + i * STEP;
    add(rulerV, 'path', { d: `M12 ${y}H${12 - tickLength(i)}`, stroke: '#999' });
    if (i % 10 === 0) {
        add(rulerV, 'text', { transform: `translate(6 ${y + 1}) rotate(-90)`, 'text-anchor': 'end' }, i * 10);
    }
}
add(rulerV, 'path', { d: 'M8.5 75V232', stroke: '#1c58a8', 'stroke-width': 1.5 });
add(rulerV, 'circle', { cx: 8.5, cy: 73.5, r: 1.8, fill: 'none', stroke: '#1c58a8' });
add(rulerV, 'circle', { cx: 8.5, cy: 234, r: 1.8, fill: 'none', stroke: '#1c58a8' });

// Inkscape default palette, two rows
const rows = [
    '000000 1a1a1a 333333 4d4d4d 666666 808080 999999 b3b3b3 cccccc e6e6e6 ececec f2f2f2 f9f9f9 ffffff ' +
    '800000 ff0000 808018 ffff33 088018 25f035 088080 22fbfd 000080 0000ff 800080 ff00ff ' +
    '2b0000 550000 800000 aa0000 d40000 ff0000 ff2a2a ff5555 ff8080 ffaaaa ffd5d5 ' +
    '280b0b 501616 782121 a02c2c c83737 d35f5f de8787 e9afaf f4d7d7 ' +
    '241c1c 483737 6c5353 916f6f ac9393 c8b7b7 e3dbdb 2b1100',
    '552200 803300 aa4400 d45500 ff6610 ff7f2a ff9955 ffb380 ffccaa ffe6d5 ' +
    '28170b 502d16 784421 a05a2c c87137 d38d5f deaa87 e9c6af f4e3d7 ' +
    '241f1c 483e37 6c5d53 917c6f ac9d93 c8beb7 e3dedb ' +
    '2b2200 554400 806610 aa8818 d4aa20 ffcc28 ffd42a ffdd55 ffe680 ffeeaa fff6d5 ' +
    '28220b 504416 786721 a0892c c8ab37 d3bc5f decd87 e9ddaf f4eed7 ' +
    '24221c 484537 6c6753 918a6f aca793 c8c4b7 e3e2db 222b00'
];
const swatches = document.getElementById('swatches');
rows.join(' ').split(' ').forEach((color) => {
    const cell = document.createElement('i');
    cell.style.background = '#' + color;
    if (color === '25f035') cell.className = 'current';
    swatches.appendChild(cell);
});
```
